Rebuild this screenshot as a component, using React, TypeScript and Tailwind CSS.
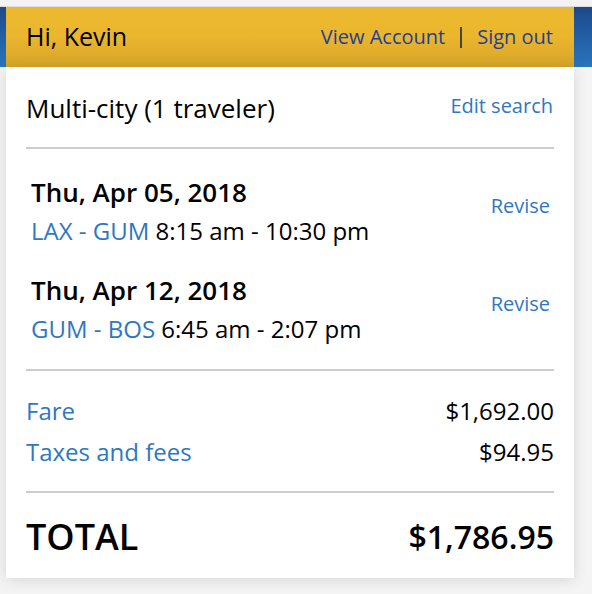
export default function App() {
  const legs = [
    { date: "Thu, Apr 05, 2018", route: "LAX - GUM", time: "8:15 am - 10:30 pm" },
    { date: "Thu, Apr 12, 2018", route: "GUM - BOS", time: "6:45 am - 2:07 pm" },
  ];

  return (
    <div
      className="min-h-[594px] w-[592px] bg-[#f4f4f4] text-black"
      style={{ fontFamily: '"Open Sans", "Noto Sans", sans-serif' }}
    >
      {/* top strip */}
      <div className="h-[7px] bg-[#f3f3f3] border-b border-[#dcdcdc]" />

      {/* header band */}
      <div className="bg-gradient-to-b from-[#1d4a8b] to-[#2a74bc]">
        <div className="ml-[6px] w-[568px] h-[60px] flex items-center justify-between pl-5 pr-[21px] bg-gradient-to-b from-[#ecb92e] via-[#eab62d] to-[#d7a429]">
          <span className="text-[25px] text-black">Hi, Kevin</span>
          <div className="flex items-center text-[20px] text-[#1f3f96]">
            <a>View Account</a>
            <span className="mx-[15px] w-[2px] h-[21px] bg-[#444]" />
            <a>Sign out</a>
          </div>
        </div>
      </div>

      {/* card */}
      <div className="ml-[6px] w-[568px] bg-white px-5 shadow-[0_2px_14px_rgba(0,0,0,0.12)]">
        <div className="flex justify-between items-start pt-[25px] pb-[23px]">
          <span className="text-[26px] leading-[32px]">Multi-city (1 traveler)</span>
          <a className="text-[20px] leading-[28px] text-[#2e78c2] mr-[1px]">Edit search</a>
        </div>
        <div className="h-[2px] bg-[#cccccc]" />

        <div className="pt-[27px] pb-[24px] pl-[5px] pr-1">
          {legs.map((leg, i) => (
            <div key={i} className={`flex justify-between items-center ${i > 0 ? "mt-[27px]" : ""}`}>
              <div>
                <div className="text-[26px] leading-[32px] font-semibold">{leg.date}</div>
                <div className="text-[24px] leading-[32px] mt-[7px]">
                  <span className="text-[#2e78c2]">{leg.route}</span> {leg.time}
                </div>
              </div>
              <a className="text-[20px] leading-[28px] text-[#2e78c2] mb-[12px]">Revise</a>
            </div>
          ))}
        </div>
        <div className="h-[2px] bg-[#cccccc]" />

        <div className="pt-[24px] pb-[23px] flex flex-col gap-[9px] text-[24px] leading-[32px]">
          <div className="flex justify-between">
            <span className="text-[#2e78c2]">Fare</span>
            <span>$1,692.00</span>
          </div>
          <div className="flex justify-between">
            <span className="text-[#2e78c2]">Taxes and fees</span>
            <span>$94.95</span>
          </div>
        </div>
        <div className="h-[2px] bg-[#cccccc]" />

        <div className="pt-[22px] pb-[19px] flex justify-between items-center font-semibold">
          <span className="text-[36px] leading-[44px]">TOTAL</span>
          <span className="text-[32px] leading-[44px]">$1,786.95</span>
        </div>
      </div>
    </div>
  );
}
